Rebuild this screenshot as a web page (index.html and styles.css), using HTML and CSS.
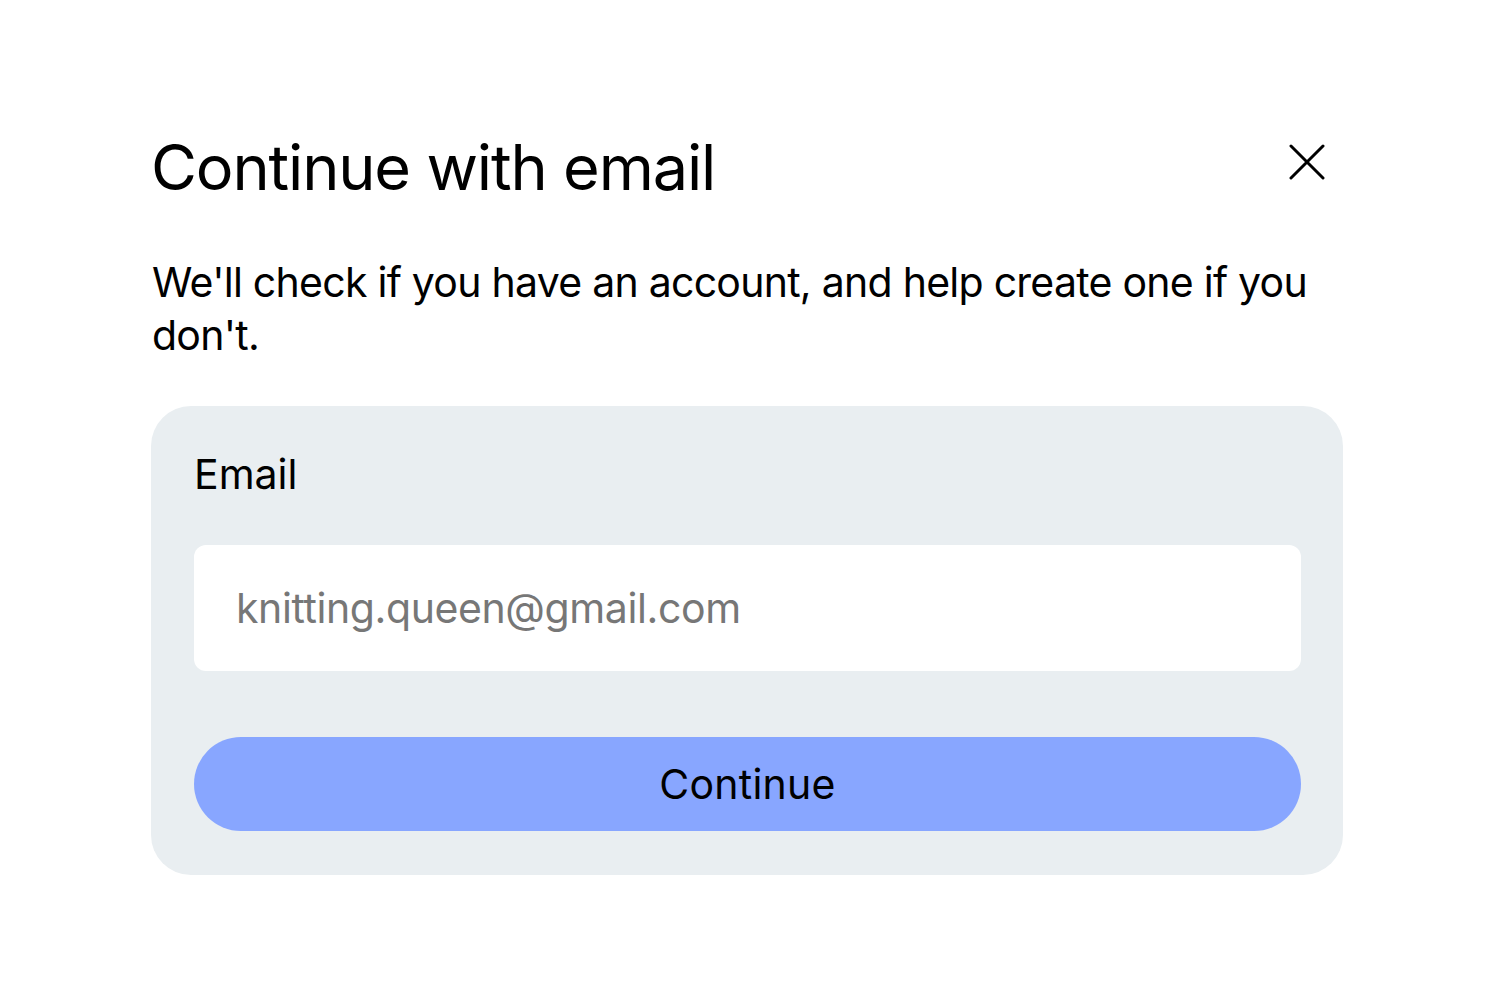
FILE: index.html
```html
<!DOCTYPE html>
<html lang="en">
<head>
<meta charset="utf-8">
<title>Continue with email</title>
<link rel="stylesheet" href="styles.css">
</head>
<body>
<div class="dialog">
  <div class="header">
    <h1 class="title">Continue with email</h1>
    <button class="close" aria-label="Close">
      <svg width="36" height="36" viewBox="0 0 36 36" fill="none" stroke="#000" stroke-width="3" stroke-linecap="round"><path d="M2 2L34 34M34 2L2 34"/></svg>
    </button>
  </div>
  <p class="intro">We'll check if you have an account, and help create one if you don't.</p>
  <form class="card">
    <label class="label" for="email">Email</label>
    <input class="input" id="email" type="email" placeholder="knitting.queen@gmail.com">
    <button class="submit" type="button">Continue</button>
  </form>
</div>
</body>
</html>
```
FILE: styles.css
```css
html, body {
  margin: 0;
  padding: 0;
  background: #ffffff;
}
body {
  font-family: Inter, "Liberation Sans", Arial, sans-serif;
  color: #000;
}
.dialog {
  width: 1192px;
  margin-left: 151px;
  padding-top: 127px;
}
.header {
  display: flex;
  justify-content: space-between;
  align-items: flex-start;
}
.title {
  margin: 0;
  font-size: 63px;
  font-weight: 400;
  line-height: 80px;
  letter-spacing: -1.15px;
}
.close {
  border: 0;
  background: none;
  padding: 0;
  margin: 17px 18px 0 0;
  width: 36px;
  height: 36px;
  cursor: pointer;
}
.close svg { display: block; }
.intro {
  margin: 49px 0 0 1px;
  font-size: 41px;
  line-height: 53px;
  letter-spacing: -0.74px;
  width: 1180px;
}
.card {
  margin-top: 44px;
  background: #e9eef1;
  border-radius: 40px;
  padding: 44px 42px 44px 43px;
  display: flex;
  flex-direction: column;
}
.label {
  font-size: 41px;
  line-height: 48px;
  letter-spacing: 0;
}
.input {
  margin-top: 47px;
  height: 126px;
  box-sizing: border-box;
  border: 0;
  border-radius: 12px;
  background: #fff;
  padding: 0 42px;
  font-family: inherit;
  font-size: 41px;
  color: #000;
  outline: none;
}
.input::placeholder {
  color: #777777;
  letter-spacing: -0.4px;
}
.submit {
  margin-top: 66px;
  height: 94px;
  border: 0;
  border-radius: 47px;
  background: #88a6ff;
  font-family: inherit;
  font-size: 41px;
  color: #000;
  letter-spacing: 0.25px;
  cursor: pointer;
}
```
